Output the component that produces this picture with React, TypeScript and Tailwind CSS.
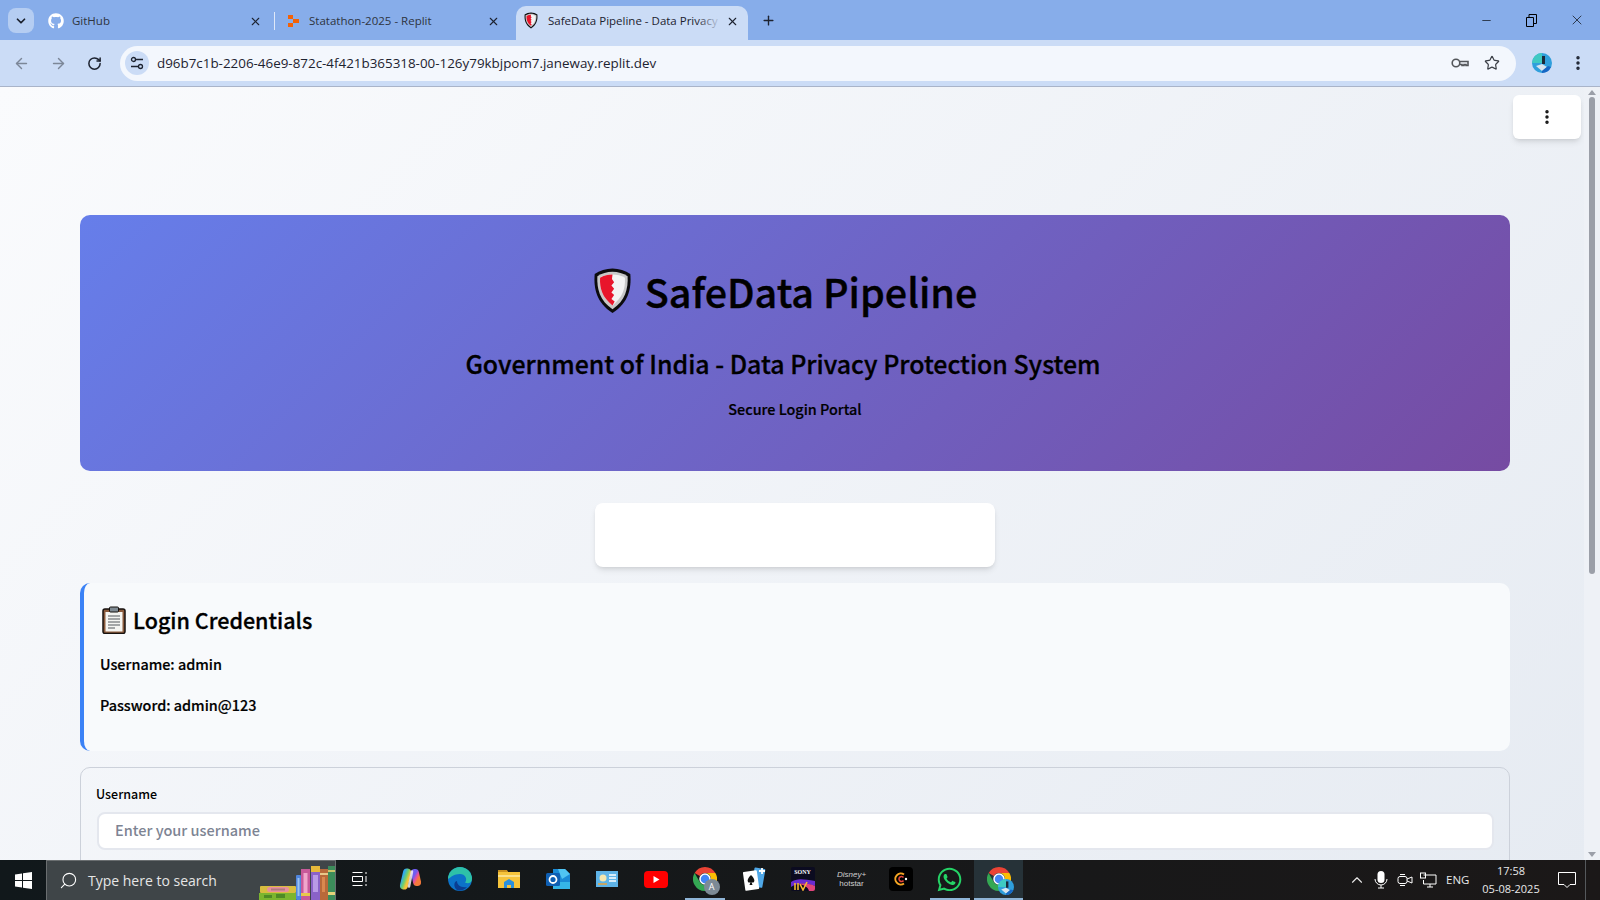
import React from "react";
import { ArrowLeft, ArrowRight, RotateCw, X, Plus, ChevronDown, Star, EllipsisVertical, Minus, ChevronUp, Search } from "lucide-react";
import { FaGithub, FaWhatsapp } from "react-icons/fa";

const uiFont = "font-['Open_Sans','Noto_Sans',sans-serif]";

const ShieldIcon: React.FC<{ size: number }> = ({ size }) => (
  <svg width={size} height={size * 1.22} viewBox="0 0 36 44">
    <path d="M18 1.500C24 1.500 30 3.500 34.500 6.500C35.500 20 33 33 18 42.500C3 33 .5 20 1.500 6.500C6 3.500 12 1.500 18 1.500Z" fill="#0c0c0e" />
    <path d="M18 4.500C23 4.500 28 6 32 8.500C32.500 20 30 31 18 39C6 31 3.500 20 4 8.500C8 6 13 4.500 18 4.500Z" fill="#c8c8c8" />
    <path d="M18 7C22 7 26 8 29.500 10C30 20 27.500 28 18 35.500C8.500 28 6 20 6.500 10C10 8 14 7 18 7Z" fill="#f3f3f3" />
    <path d="M18 7C14 7 10 8 6.500 10C6 20 8.500 28 18 35.500L20 32L17 29.500L19.500 26L17 23.500L19.500 20L17 17L19.500 14L17.500 11Z" fill="#e8152b" />
  </svg>
);

const ClipboardIcon = () => (
  <svg width="24" height="28" viewBox="0 0 24 28">
    <rect x="1" y="3" width="22" height="24.500" rx="2" fill="#8a5a3c" stroke="#17120f" strokeWidth="1.500" />
    <rect x="3.500" y="6" width="17" height="19.500" fill="#f5f5f2" />
    <rect x="7.500" y="1" width="9" height="5" rx="1" fill="#7f8a93" stroke="#17120f" strokeWidth="1" />
    <path d="M6 10h12M6 13h12M6 16h12M6 19h12M6 22h7" stroke="#55585c" strokeWidth="1.200" />
  </svg>
);

const ReplitIcon = () => (
  <svg width="13" height="14" viewBox="0 0 13 14">
    <path d="M1 1h5v4H1zM6 5h6v4H6zM1 9h5v4H1z" fill="#f26207" />
  </svg>
);

const KeyIcon = () => (
  <svg width="18" height="12" viewBox="0 0 18 12" fill="none" stroke="#53565a" strokeWidth="1.600">
    <circle cx="5" cy="6" r="3.800" />
    <path d="M9 4.500H17V8.500H15V7.500H13V8.500H11V7.500H9" />
  </svg>
);

const TuneIcon = () => (
  <svg width="14" height="14" viewBox="0 0 14 14" fill="none" stroke="#1d2330" strokeWidth="1.300">
    <circle cx="3.500" cy="3.500" r="2" />
    <path d="M6 3.500h7M1 10.500h7" />
    <circle cx="10.500" cy="10.500" r="2" />
  </svg>
);

const Avatar: React.FC<{ size: number }> = ({ size }) => (
  <svg width={size} height={size} viewBox="0 0 20 20">
    <circle cx="10" cy="10" r="10" fill="#2f9fdc" />
    <path d="M0 10A10 10 0 0 1 10 0V10Z" fill="#3fc9c2" />
    <path d="M10 3h3v8h-3z" fill="#1b2a3a" />
    <path d="M4 13l6-2 5 3-5 4z" fill="#d7e4ef" />
    <path d="M10 18l6-5 3 1a10 10 0 0 1-9 6z" fill="#1666c4" />
  </svg>
);

const ChromeIcon: React.FC<{ badge?: "a" | "avatar" }> = ({ badge }) => (
  <div className="relative w-6 h-6">
    <svg width="24" height="24" viewBox="0 0 24 24">
      <path d="M12 0A12 12 0 0 1 22.400 6H12A6 6 0 0 0 6.800 9L1.600 6A12 12 0 0 1 12 0Z" fill="#ea4335" />
      <path d="M22.400 6A12 12 0 0 1 12 24L17.200 15A6 6 0 0 0 17.200 9 6 6 0 0 0 12 6Z" fill="#fbbc04" />
      <path d="M12 24A12 12 0 0 1 1.600 6L6.800 15A6 6 0 0 0 12 18 6 6 0 0 0 17.200 15Z" fill="#34a853" />
      <circle cx="12" cy="12" r="5" fill="#4285f4" stroke="#fff" strokeWidth="1.500" />
    </svg>
    {badge === "a" && (
      <div className="absolute -right-[3px] -bottom-[4px] w-4 h-4 rounded-full bg-[#7d8a96] text-white text-[9px] leading-4 text-center">A</div>
    )}
    {badge === "avatar" && (
      <div className="absolute -right-[3px] -bottom-[4px]">
        <Avatar size={16} />
      </div>
    )}
  </div>
);

const BooksArt = () => (
  <svg width="77" height="34" viewBox="0 0 77 34">
    <rect x="2" y="20" width="36" height="7" rx="1" fill="#d8bd3f" />
    <rect x="9" y="21" width="22" height="5" rx="2.500" fill="#e88f9c" />
    <rect x="13" y="22.500" width="14" height="2" fill="#b07a80" />
    <rect x="1" y="27" width="37" height="7" fill="#7cb52f" />
    <path d="M6 29h8v3H6zM18 28h9v4h-9z" fill="#4f8a25" />
    <rect x="38" y="9" width="5" height="25" rx="1" fill="#4f86dd" />
    <rect x="39.500" y="12" width="2" height="18" fill="#9ac2f2" />
    <rect x="43" y="3" width="9" height="31" fill="#c85a9a" />
    <rect x="45.500" y="7" width="4" height="20" fill="#f0a6cc" />
    <rect x="43" y="27" width="9" height="3" fill="#e8c84a" />
    <rect x="53" y="0" width="9" height="34" fill="#8a62c8" />
    <rect x="53" y="0" width="9" height="6" fill="#e6b93a" />
    <rect x="55" y="9" width="5" height="17" fill="#b89ae6" />
    <rect x="62" y="3" width="8" height="31" fill="#b8693a" />
    <rect x="62" y="7" width="8" height="2" fill="#e8c88a" />
    <rect x="64" y="11" width="3" height="15" fill="#d9884f" />
    <rect x="70" y="0" width="7" height="34" fill="#3c8c5a" />
    <rect x="70" y="4" width="7" height="2" fill="#c9c46a" />
    <rect x="70" y="26" width="7" height="3" fill="#e5d47a" />
  </svg>
);

const WindowsLogo = () => (
  <svg width="17" height="17" viewBox="0 0 17 17" fill="#fff">
    <path d="M0 2.500L7 1.500V8H0ZM8 1.300L17 0V8H8ZM0 9H7V15.500L0 14.500ZM8 9H17V17L8 15.700Z" />
  </svg>
);

const taskbarIcons: { key: string; node: React.ReactNode; running?: boolean; active?: boolean }[] = [
  {
    key: "taskview",
    node: (
      <svg width="16" height="16" viewBox="0 0 16 16" fill="none" stroke="#fff" className="-ml-[3px]">
        <path d="M.5 1.500h10M.5 14.500h10M.5 5.500h10v5H.5zM14 1v2M14 5v6M14 13v2" />
      </svg>
    ),
  },
  {
    key: "copilot",
    node: (
      <svg width="23" height="22" viewBox="0 0 23 22" fill="none" strokeLinecap="round">
        <defs>
          <linearGradient id="cpl" x1="0" y1="0" x2="0.6" y2="1">
            <stop offset="0" stopColor="#2fa8f2" />
            <stop offset=".55" stopColor="#6fd06a" />
            <stop offset="1" stopColor="#f6c23c" />
          </linearGradient>
          <linearGradient id="cpr" x1="0.3" y1="0" x2="0.7" y2="1">
            <stop offset="0" stopColor="#6f5cf0" />
            <stop offset=".55" stopColor="#e84f9c" />
            <stop offset="1" stopColor="#f5793a" />
          </linearGradient>
        </defs>
        <path d="M8 4.500L5 17.500" stroke="url(#cpl)" strokeWidth="8" />
        <path d="M16 5L18 14" stroke="url(#cpr)" strokeWidth="8" />
        <path d="M13 3.500L10 18.500" stroke="#f4f0f6" strokeWidth="2.500" opacity=".85" />
      </svg>
    ),
  },
  {
    key: "edge",
    node: (
      <svg width="24" height="24" viewBox="0 0 24 24">
        <circle cx="12" cy="12" r="12" fill="#0c72c8" />
        <path d="M0 12A12 12 0 0 1 24 12C24 16 20 17 17 15.500C20 12 17 7 12 7C6 7 3 10 0 12Z" fill="#2ec1a8" />
        <path d="M9 14C9 18 13 21 19 20C17 23 12 24 9 23C6 21 5 15 9 14Z" fill="#0a3d91" />
      </svg>
    ),
  },
  {
    key: "files",
    node: (
      <svg width="22" height="20" viewBox="0 0 22 20">
        <path d="M0 1h8l2 2h12v16H0Z" fill="#f5c33b" />
        <path d="M0 1h9l1 2H0Z" fill="#c9901f" />
        <path d="M0 6h22v2H0Z" fill="#fbe08a" />
        <path d="M6 19v-6l5-3 5 3v6h-3v-3h-4v3Z" fill="#2a8fdc" />
      </svg>
    ),
  },
  {
    key: "outlook",
    node: (
      <svg width="24" height="22" viewBox="0 0 24 22">
        <path d="M7 1h12l5 5v15H7Z" fill="#1a8ad6" />
        <path d="M7 14h17v7H7Z" fill="#35b5e8" />
        <path d="M12 1h7l5 5-8 5Z" fill="#50c4f2" />
        <rect x="0" y="5" width="14" height="13" rx="1.500" fill="#0f5fb3" />
        <circle cx="7" cy="11.500" r="3.500" fill="none" stroke="#fff" strokeWidth="1.800" />
      </svg>
    ),
  },
  {
    key: "news",
    node: (
      <svg width="22" height="16" viewBox="0 0 22 16">
        <rect width="22" height="16" fill="#5fb4e8" />
        <circle cx="7" cy="7" r="3.500" fill="#f4e7b0" />
        <path d="M2 13h9" stroke="#e8a33c" strokeWidth="1.500" />
        <path d="M13 4h7M13 7h7M13 10h7" stroke="#fff" strokeWidth="1.500" />
      </svg>
    ),
  },
  {
    key: "youtube",
    node: (
      <svg width="24" height="17" viewBox="0 0 24 17">
        <rect width="24" height="17" rx="4" fill="#f00" />
        <path d="M9.500 5v7l6-3.500Z" fill="#fff" />
      </svg>
    ),
  },
  { key: "chrome-a", node: <ChromeIcon badge="a" />, running: true },
  {
    key: "solitaire",
    node: (
      <svg width="24" height="24" viewBox="0 0 24 24">
        <rect x="11" y="1" width="11" height="19" rx="1" fill="#4fa8e8" transform="rotate(10 16 10)" />
        <rect x="2" y="4" width="14" height="19" rx="1" fill="#fff" transform="rotate(-8 9 13)" />
        <path d="M9 8C12 11 13 13 12 15C11 16 10 15.500 9.500 15L10.500 18H7.500L8.500 15C8 15.500 7 16 6 15C5 13 6 11 9 8Z" fill="#111" />
        <path d="M20 1v6M17 4h6" stroke="#fff" strokeWidth="1.800" />
      </svg>
    ),
  },
  {
    key: "sony",
    node: (
      <div className="relative w-6 h-6 rounded-[2px] bg-[#0b0b20] flex flex-col items-center overflow-hidden">
        <span className="text-[6px] leading-[10px] font-bold text-white font-['Liberation_Serif',serif]">SONY</span>
        <svg width="24" height="14" viewBox="0 0 24 14" className="absolute left-0 bottom-0">
          <path d="M0 5C6 1 12 2 24 4V9C14 6 6 6 0 10Z" fill="#6a2bd0" />
          <path d="M8 7C14 6 20 7 24 9V14H18C17 10 13 8 8 7Z" fill="#e0457b" />
          <path d="M4 6v7M7 6v7M9 7l3 6 4-8" stroke="#f5b82e" strokeWidth="1.600" fill="none" />
        </svg>
      </div>
    ),
  },
  {
    key: "hotstar",
    node: (
      <div className="flex flex-col items-center text-[#cfcfcf] font-['Liberation_Sans',sans-serif]">
        <span className="text-[8px] leading-[9px] italic">Disney+</span>
        <span className="text-[8px] leading-[9px]">hotstar</span>
      </div>
    ),
  },
  {
    key: "cplus",
    node: (
      <div className="w-6 h-6 rounded-[4px] bg-black flex items-center justify-center">
        <svg width="14" height="14" viewBox="0 0 14 14" fill="none">
          <path d="M10 2.500A5.500 5.500 0 1 0 10 11.500" stroke="#f6a623" strokeWidth="2" />
          <path d="M9.500 5.500A2.500 2.500 0 1 0 9.500 8.500" stroke="#e8463c" strokeWidth="1.500" />
          <circle cx="12" cy="7" r="1.200" fill="#fff" />
        </svg>
      </div>
    ),
  },
  { key: "whatsapp", node: <FaWhatsapp size={27} color="#25d366" />, running: true },
  { key: "chrome-me", node: <ChromeIcon badge="avatar" />, running: true, active: true },
];

const BrowserTab: React.FC<{ icon: React.ReactNode; title: string; box: string }> = ({ icon, title, box }) => (
  <div className={`${box} h-full flex items-center pl-[10px] pb-[5px]`}>
    <div className="w-4 flex justify-center">{icon}</div>
    <span className="ml-2 flex-1 text-[11.500px] text-[#2e3440]">{title}</span>
    <X size={13} strokeWidth={2} className="text-[#1d2330]" />
  </div>
);

const ChromeBar = () => (
  <header className={`${uiFont} shrink-0`}>
    <div className="h-10 bg-[#87adea] flex items-end">
      <div className="ml-2 mb-[7px] w-[26px] h-[25px] rounded-lg bg-[#b5cdf2] flex items-center justify-center">
        <ChevronDown size={14} strokeWidth={3} className="text-[#1a1f2b]" />
      </div>
      <div className="ml-[4px] h-[33px] flex">
        <BrowserTab icon={<FaGithub size={16} color="#fff" />} box="w-[236px] pr-[12px]" title="GitHub" />
        <div className="w-px h-[18px] mt-[5px] bg-[#dfe8f8]" />
        <BrowserTab icon={<ReplitIcon />} box="w-[226px] pr-[1px]" title="Statathon-2025 - Replit" />
      </div>
      <div className="ml-[15px] w-[232px] h-[34px] rounded-t-[10px] bg-[#cbdcf6] flex items-center pl-[8px] pr-[9px] pb-[4px]">
        <ShieldIcon size={14} />
        <div className="relative ml-[10px] flex-1 overflow-hidden whitespace-nowrap text-[11.500px] text-[#1d2330]">
          SafeData Pipeline - Data Privacy
          <div className="absolute inset-y-0 right-0 w-6 bg-gradient-to-r from-transparent to-[#cbdcf6]" />
        </div>
        <X size={13} strokeWidth={2} className="ml-[5px] text-[#1d2330]" />
      </div>
      <div className="ml-[13px] mb-[12px]">
        <Plus size={15} strokeWidth={2.200} className="text-[#1d2330]" />
      </div>
      <div className="ml-auto h-full flex items-center pr-[1px] text-black">
        <div className="w-[45px] flex justify-center">
          <Minus size={13} strokeWidth={1.200} />
        </div>
        <div className="w-[45px] flex justify-center">
          <svg width="11" height="13" viewBox="0 0 11 13" fill="none" stroke="#000">
            <path d="M.5 3.500h7v9h-7zM3 3.500V.5h7.500v9h-3" />
          </svg>
        </div>
        <div className="w-[45px] flex justify-center">
          <X size={16} strokeWidth={1} />
        </div>
      </div>
    </div>
    <div className="h-[47px] bg-[#cbdcf6] border-b border-[#a9b4c9] flex items-center">
      <div className="ml-[13px] flex items-center gap-[20px]">
        <ArrowLeft size={17} strokeWidth={2} className="text-[#7c8798]" />
        <ArrowRight size={17} strokeWidth={2} className="text-[#7c8798]" />
        <RotateCw size={15} strokeWidth={2.400} className="text-[#1d2330]" />
      </div>
      <div className="ml-[18px] w-[1396px] h-[35px] rounded-full bg-[#f3f7fd] flex items-center pl-[5px] pr-[16px]">
        <div className="w-6 h-6 rounded-full bg-[#cbdcf6] flex items-center justify-center">
          <TuneIcon />
        </div>
        <span className="ml-[8px] text-[13.400px] text-[#1d2330]">d96b7c1b-2206-46e9-872c-4f421b365318-00-126y79kbjpom7.janeway.replit.dev</span>
        <div className="ml-auto flex items-center gap-[15px]">
          <KeyIcon />
          <Star size={16} strokeWidth={1.800} className="text-[#3b3f46]" />
        </div>
      </div>
      <div className="ml-[16px]">
        <Avatar size={20} />
      </div>
      <EllipsisVertical size={18} strokeWidth={2.600} className="ml-[17px] text-[#1d2330]" />
    </div>
  </header>
);

const LoginPage = () => (
  <main className="relative flex-1 overflow-hidden pl-20 pr-[74px] pt-[128px] font-['Noto_Sans_CJK_SC','Noto_Sans',sans-serif] text-black">
    <button className="absolute top-2 right-[3px] w-[68px] h-11 rounded-md bg-white shadow-md flex items-center justify-center">
      <EllipsisVertical size={18} strokeWidth={2.600} className="text-[#111]" />
    </button>

    <section className="h-[256px] rounded-[10px] bg-[linear-gradient(135deg,#667eea_0%,#764ba2_100%)] flex flex-col items-center">
      <div className="mt-[48px] mr-[20px] flex items-center gap-[13px]">
        <ShieldIcon size={39} />
        <h1 className="text-[39.500px] leading-[56px] font-medium [-webkit-text-stroke:0.4px_#000]">SafeData Pipeline</h1>
      </div>
      <h2 className="mt-[26px] mr-[24px] text-[24.900px] leading-[36px] font-medium [-webkit-text-stroke:0.3px_#000]">Government of India - Data Privacy Protection System</h2>
      <p className="mt-[18px] text-[14.400px] leading-[20px] font-medium [-webkit-text-stroke:0.2px_#000]">Secure Login Portal</p>
    </section>

    <div className="mt-8 mx-auto w-[400px] h-16 rounded-lg bg-white shadow-md" />

    <section className="mt-4 h-[168px] rounded-[10px] border-l-4 border-[#3b82f6] bg-[#f8fafc] pl-4 pt-[21px]">
      <div className="flex items-center gap-[7px]">
        <div className="ml-[2px]">
          <ClipboardIcon />
        </div>
        <h3 className="text-[21.500px] leading-[32px] font-medium [-webkit-text-stroke:0.3px_#000]">Login Credentials</h3>
      </div>
      <p className="mt-[16px] text-[14.400px] leading-[24px] font-medium [-webkit-text-stroke:0.2px_#000]">Username: admin</p>
      <p className="mt-[17px] text-[14.400px] leading-[24px] font-medium [-webkit-text-stroke:0.2px_#000]">Password: admin@123</p>
    </section>

    <form className="mt-4 h-[200px] rounded-[10px] border border-[#ccd1da] pl-[16px] pr-[15px] pt-[16px]">
      <label className="-ml-px block text-[12.500px] leading-[20px] font-medium">Username</label>
      <input
        placeholder="Enter your username"
        className="mt-[8px] block w-full h-[38px] rounded-lg border-2 border-[#e4e7ee] bg-white pl-[16px] pb-[4px] text-[14.500px] font-medium outline-none placeholder:text-[#7d8493]"
      />
    </form>
  </main>
);

const Scrollbar = () => (
  <div className="w-4 shrink-0 flex flex-col items-center justify-between py-[3px] bg-[#eef1f6]">
    <div className="w-full flex flex-col items-center">
      <div className="w-0 h-0 border-x-[4px] border-x-transparent border-b-[5px] border-b-[#9b9fa8]" />
      <div className="mt-[2px] w-[6px] h-[477px] rounded-full bg-[#9b9fa8]" />
    </div>
    <div className="w-0 h-0 border-x-[4px] border-x-transparent border-t-[5px] border-t-[#9b9fa8]" />
  </div>
);

const Taskbar = () => (
  <footer className="h-10 shrink-0 bg-gradient-to-r from-[#11181b] to-[#1b1818] flex items-stretch font-['Open_Sans','Noto_Sans',sans-serif] text-white">
    <div className="w-[46px] flex items-center justify-center">
      <WindowsLogo />
    </div>
    <div className="w-[290px] bg-[#3f4548] border border-[#6a6e70] border-b-0 flex items-end relative">
      <div className="self-center ml-[12px]">
        <Search size={19} strokeWidth={1.400} className="text-white -scale-x-100" />
      </div>
      <span className="self-center ml-[10px] text-[14px] text-[#e6e6e6]">Type here to search</span>
      <div className="absolute right-0 bottom-0">
        <BooksArt />
      </div>
    </div>
    <div className="flex ml-[1px]">
      {taskbarIcons.map((item) => (
        <div key={item.key} className={`w-[49px] flex flex-col items-center ${item.active ? "bg-[#263238]" : ""}`}>
          <div className="flex-1 flex items-center justify-center">{item.node}</div>
          <div className={`h-0.5 ${item.active ? "w-full bg-[#8fb4d6]" : item.running ? "w-10 bg-[#8fb4d6]" : ""}`} />
        </div>
      ))}
    </div>
    <div className="ml-auto flex items-center text-[#e8e8e8]">
      <ChevronUp size={18} strokeWidth={1.500} />
      <svg width="14" height="18" viewBox="0 0 14 18" className="ml-[8px]" fill="#fff">
        <rect x="3.500" y="0" width="7" height="12" rx="3.500" />
        <path d="M1 8a6 6 0 0 0 12 0M7 14v3M4 17h6" fill="none" stroke="#fff" />
      </svg>
      <svg width="16" height="16" viewBox="0 0 16 16" fill="none" stroke="#fff" className="ml-[9px]">
        <rect x="1" y="4.500" width="9" height="7" rx="2" />
        <path d="M10 7l5-2v6l-5-2M3 2.500h5M3 13.500h5" />
      </svg>
      <svg width="17" height="16" viewBox="0 0 17 16" fill="none" stroke="#fff" className="ml-[7px]">
        <path d="M3.500 3H16v9H3.500V8M7 15h6M10 12v3" />
        <rect x=".5" y="1" width="5" height="5" />
      </svg>
      <span className="ml-[9px] w-[26px] text-[11.500px]">ENG</span>
      <div className="ml-[2px] w-[74px] text-center text-[11px] leading-[18px]">
        <div>17:58</div>
        <div>05-08-2025</div>
      </div>
      <div className="ml-px w-[36px] flex justify-center">
        <svg width="18" height="16" viewBox="0 0 18 16" fill="none" stroke="#fff">
          <path d="M.5.5h17v12H12l-3 3-3-3H.5Z" />
        </svg>
      </div>
      <div className="w-[15px] h-full border-l border-[#55595c]" />
    </div>
  </footer>
);

export default function App() {
  return (
    <div className="w-[1600px] h-[900px] flex flex-col overflow-hidden">
      <ChromeBar />
      <div className="flex-1 min-h-0 flex bg-[linear-gradient(135deg,#fafbfd_0%,#e6ebf2_100%)]">
        <LoginPage />
        <Scrollbar />
      </div>
      <Taskbar />
    </div>
  );
}
